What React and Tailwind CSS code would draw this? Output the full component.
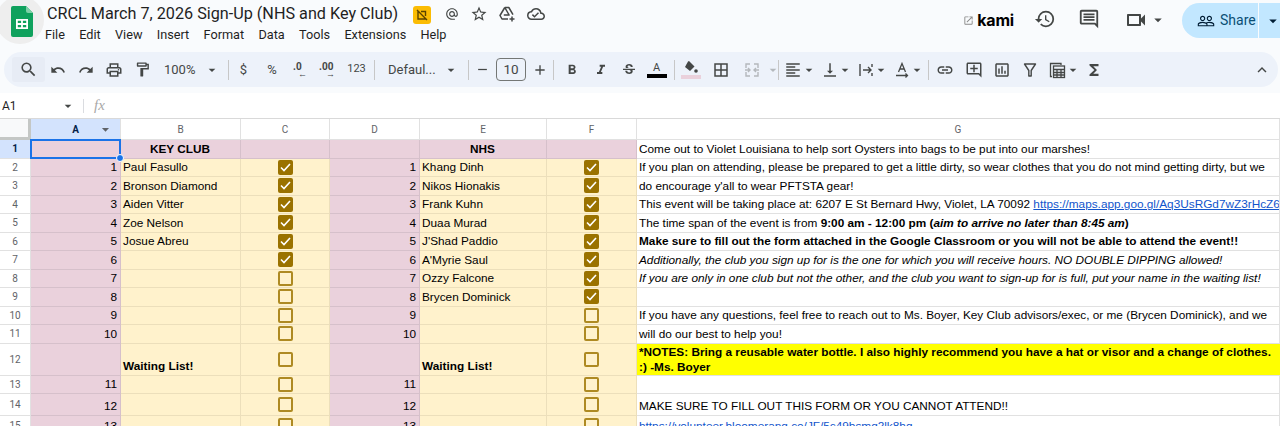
import React from "react";
import {
  MdSearch, MdUndo, MdRedo, MdOutlinePrint, MdOutlineFormatPaint, MdArrowDropDown, MdRemove, MdAdd,
  MdFormatBold, MdFormatItalic, MdStrikethroughS, MdBorderAll, MdFormatAlignLeft, MdVerticalAlignBottom,
  MdLink, MdOutlineAddComment, MdOutlineInsertChart, MdFunctions, MdExpandLess, MdHistory, MdOutlineComment,
  MdOutlineVideocam, MdPeopleOutline, MdStarBorder, MdOutlineCloudDone, MdOpenInNew,
  MdOutlineAlternateEmail,
} from "react-icons/md";

const G = "#444746";

function SheetsLogo() {
  return (
    <svg width="22" height="31" viewBox="0 0 22 31">
      <path d="M2 0h13l7 7v22a2 2 0 0 1-2 2H2a2 2 0 0 1-2-2V2a2 2 0 0 1 2-2z" fill="#0fa15d" />
      <path d="M15 0l7 7h-5a2 2 0 0 1-2-2z" fill="#7fd0a8" />
      <path d="M5 13h12v10H5z M6.8 14.8v2.3h3.3v-2.3z M11.9 14.8v2.3h3.3v-2.3z M6.8 18.9v2.3h3.3v-2.3z M11.9 18.9v2.3h3.3v-2.3z" fill="#fff" fillRule="evenodd" />
    </svg>
  );
}

function DriveAdd() {
  return (
    <svg width="18" height="18" viewBox="0 0 18 18" fill="none" stroke="#444746" strokeWidth="1.5" strokeLinejoin="round">
      <path d="M6.8 2.5h4l4.2 7.2M6.8 2.5L2 10.5l2 3.5h6M6.8 2.5l4.3 7.5H5.8" />
      <path d="M14 11.5v5M11.5 14h5" />
    </svg>
  );
}

function Btn({ w = "w-[28px]", children }) {
  return <div className={`${w} h-[24px] flex items-center justify-center shrink-0`}>{children}</div>;
}
const Sep = () => <div className="w-px h-[20px] bg-[#c7c7c7] shrink-0" />;
const Caret = ({ c = G }) => <MdArrowDropDown size={16} color={c} />;
const NearCaret = () => <div className="-ml-[3px] mr-[3px] shrink-0"><Caret /></div>;

function TextColor() {
  return (
    <div className="flex flex-col items-center">
      <span className="text-[11px] leading-[13px] text-[#444746]">A</span>
      <div className="w-[20px] h-[4px] bg-black" />
    </div>
  );
}
function FillColor() {
  return (
    <div className="flex flex-col items-center">
      <svg width="16" height="14" viewBox="0 0 16 14">
        <path d="M5 0.5l1-0.5 5.5 5.5L7 10 2 6z" fill="#444746" />
        <circle cx="13" cy="10" r="1.8" fill="#444746" />
      </svg>
      <div className="w-[20px] h-[4px] bg-[#ead1dc]" />
    </div>
  );
}
function Merge() {
  return (
    <svg width="16" height="16" viewBox="0 0 16 16" fill="none" stroke="#b4b8bc" strokeWidth="1.4">
      <path d="M6 2H2v4M2 10v4h4M10 2h4v4M14 10v4h-4M1 8h5M15 8h-5M4 6l2 2-2 2M12 6l-2 2 2 2" />
    </svg>
  );
}
function WrapIcon() {
  return (
    <svg width="16" height="16" viewBox="0 0 16 16" fill="none" stroke="#444746" strokeWidth="1.4">
      <path d="M2 2v12M14 2v3M14 11v3M5 8h8M10 5l3 3-3 3" />
    </svg>
  );
}
function RotateIcon() {
  return (
    <svg width="16" height="16" viewBox="0 0 16 16" fill="none" stroke="#444746" strokeWidth="1.3">
      <path d="M4.5 10L8 1.5 11.5 10M5.8 7h4.4M2 13.5h11M11.5 11.5l2 2-2 2" />
    </svg>
  );
}
function FilterIcon() {
  return (
    <svg width="14" height="16" viewBox="0 0 14 16" fill="none" stroke="#444746" strokeWidth="1.4" strokeLinejoin="round">
      <path d="M1.5 2h11L8.2 8.5V14H5.8V8.5z" />
    </svg>
  );
}
function TableFn() {
  return (
    <svg width="17" height="18" viewBox="0 0 17 18" fill="none" stroke="#444746" strokeWidth="1.3">
      <path d="M3 15.5H1.5V2.5H12V4" />
      <rect x="4.5" y="5" width="11" height="11.5" />
      <path d="M4.5 8.5h11M4.5 11.5h11M4.5 14h11M8 8.5v8M12 8.5v8" />
    </svg>
  );
}
function Fx() {
  return <span className="text-[15px] italic text-[#a8a8a8] [font-family:'Liberation_Serif',serif]">fx</span>;
}

function Check({ on }) {
  if (on) {
    return (
      <div className="w-[15px] h-[15px] rounded-[2px] bg-[#9a7200] flex items-center justify-center">
        <svg width="11" height="9" viewBox="0 0 11 9" fill="none" stroke="#fff" strokeWidth="1.6">
          <path d="M1 4.5l3 3 6-6.5" />
        </svg>
      </div>
    );
  }
  return <div className="w-[15px] h-[15px] rounded-[2px] border-2 border-[#ae8a22]" />;
}

const PINK = "bg-[#ead1dc] border-[#d6c0cb]";
const YEL = "bg-[#fff2cc] border-[#ecdfbb]";
const base = "border-r border-b flex items-end pl-[2px] pr-[3px] pb-[1px] leading-[15px] whitespace-nowrap overflow-hidden min-w-0";

function Link({ children }) {
  return <span className="text-[#1155cc] underline">{children}</span>;
}

const rows = [
  { n: 1, a: "", b: "KEY CLUB", d: "", e: "NHS", head: true,
    g: "Come out to Violet Louisiana to help sort Oysters into bags to be put into our marshes!" },
  { n: 2, a: 1, b: "Paul Fasullo", c: 1, d: 1, e: "Khang Dinh", f: 1,
    g: "If you plan on attending, please be prepared to get a little dirty, so wear clothes that you do not mind getting dirty, but we" },
  { n: 3, a: 2, b: "Bronson Diamond", c: 1, d: 2, e: "Nikos Hionakis", f: 1, g: "do encourage y'all to wear PFTSTA gear!" },
  { n: 4, a: 3, b: "Aiden Vitter", c: 1, d: 3, e: "Frank Kuhn", f: 1,
    g: <>This event will be taking place at: 6207 E St Bernard Hwy, Violet, LA 70092 <Link>https://maps.app.goo.gl/Aq3UsRGd7wZ3rHcZ6</Link></> },
  { n: 5, a: 4, b: "Zoe Nelson", c: 1, d: 4, e: "Duaa Murad", f: 1,
    g: <>The time span of the event is from <b>9:00 am - 12:00 pm (<i>aim to arrive no later than 8:45 am</i>)</b></> },
  { n: 6, a: 5, b: "Josue Abreu", c: 1, d: 5, e: "J'Shad Paddio", f: 1,
    g: <b>Make sure to fill out the form attached in the Google Classroom or you will not be able to attend the event!!</b> },
  { n: 7, a: 6, b: "", c: 1, d: 6, e: "A'Myrie Saul", f: 1,
    g: <i>Additionally, the club you sign up for is the one for which you will receive hours. NO DOUBLE DIPPING allowed!</i> },
  { n: 8, a: 7, b: "", c: 0, d: 7, e: "Ozzy Falcone", f: 1,
    g: <i>If you are only in one club but not the other, and the club you want to sign-up for is full, put your name in the waiting list!</i> },
  { n: 9, a: 8, b: "", c: 0, d: 8, e: "Brycen Dominick", f: 1, g: "" },
  { n: 10, a: 9, b: "", c: 0, d: 9, e: "", f: 0,
    g: "If you have any questions, feel free to reach out to Ms. Boyer, Key Club advisors/exec, or me (Brycen Dominick), and we" },
  { n: 11, a: 10, b: "", c: 0, d: 10, e: "", f: 0, g: "will do our best to help you!" },
  { n: 12, a: "", b: <b>Waiting List!</b>, c: 0, d: "", e: <b>Waiting List!</b>, f: 0, note: true },
  { n: 13, a: 11, b: "", c: 0, d: 11, e: "", f: 0, g: "" },
  { n: 14, a: 12, b: "", c: 0, d: 12, e: "", f: 0, g: "MAKE SURE TO FILL OUT THIS FORM OR YOU CANNOT ATTEND!!" },
  { n: 15, a: 13, b: "", c: 0, d: 13, e: "", f: 0, g: <Link>https://volunteer.bloomerang.co/JF/5c49bsmq2lk8hg</Link> },
];

function Row({ r }) {
  const num = "justify-end " + PINK;
  const headCls = r.head ? "justify-center font-bold " + PINK : YEL;
  const checkCell = (v) => (
    <div className={`border-r border-b flex items-center justify-center ${r.head ? PINK : YEL}`}>
      {!r.head && <Check on={v === 1} />}
    </div>
  );
  return (
    <>
      <div className={`border-r border-b border-[#e1e1e1] flex items-center justify-center text-[10px] [font-family:Roboto,sans-serif] ${r.n === 1 ? "bg-[#d3e3fd] font-bold text-[#041e49]" : "bg-white text-[#5f6368]"}`}>
        {r.n}
      </div>
      <div className={`${base} ${num} relative !overflow-visible`}>
        {r.a}
        {r.n === 1 && (
          <div className="absolute inset-[-1px] border-2 border-[#1a73e8] z-10">
            <div className="absolute right-[-5px] bottom-[-5px] w-[8px] h-[8px] rounded-full bg-[#1a73e8] border border-white" />
          </div>
        )}
      </div>
      <div className={`${base} ${headCls}`}>{r.b}</div>
      {checkCell(r.c)}
      <div className={`${base} ${num}`}>{r.d}</div>
      <div className={`${base} ${headCls}`}>{r.e}</div>
      {checkCell(r.f)}
      {r.note ? (
        <div className="border-b border-[#e1e1e1] bg-[#ffff00] flex flex-col justify-center pl-[2px] pt-[2px] font-bold leading-[15px] whitespace-nowrap overflow-hidden">
          <div>*NOTES: Bring a reusable water bottle. I also highly recommend you have a hat or visor and a change of clothes.</div>
          <div>:) -Ms. Boyer</div>
        </div>
      ) : (
        <div className={`${base} border-[#e1e1e1] bg-white`}><span>{r.g}</span></div>
      )}
    </>
  );
}

const heads = ["B", "C", "D", "E", "F", "G"];

export default function App() {
  return (
    <div className="w-[1280px] h-[426px] overflow-hidden bg-white flex flex-col [font-family:'Liberation_Sans',Arial,sans-serif] text-[11.8px] text-black">
      {/* Title bar */}
      <div className="bg-[#f9fbfd] h-[52px] shrink-0 flex overflow-hidden">
        <div className="w-[48px] h-[48px] -ml-[4px] -mt-[4px] rounded-full bg-[#eeeeee] shrink-0 flex items-center justify-center pl-[3px] pt-[2px]">
          <SheetsLogo />
        </div>
        <div className="ml-[3px] flex flex-col [font-family:Roboto,sans-serif]">
          <div className="flex items-center h-[28px]">
            <span className="text-[16.2px] text-[#1f1f1f] leading-[28px] whitespace-nowrap">CRCL March 7, 2026 Sign-Up (NHS and Key Club)</span>
            <div className="ml-[15px] mt-[1px] w-[18px] h-[18px] rounded-[3px] bg-[#fbbc04] flex items-center justify-center">
              <svg width="12" height="12" viewBox="0 0 12 12" fill="none" stroke="#5b4300" strokeWidth="1.4">
                <path d="M1 1l10 10M2 2v8h8M5 2.5h4.5V7" />
              </svg>
            </div>
            <div className="ml-[14px]"><MdOutlineAlternateEmail size={14} color={G} /></div>
            <div className="ml-[11px]"><MdStarBorder size={18} color={G} /></div>
            <div className="ml-[10px]"><DriveAdd /></div>
            <div className="ml-[11px]"><MdOutlineCloudDone size={18} color={G} /></div>
          </div>
          <div className="flex gap-[14.3px] text-[12.7px] text-[#1f1f1f] leading-[16px] -ml-[2px] mt-[-1px]">
            <span>File</span><span>Edit</span><span>View</span><span>Insert</span><span>Format</span><span>Data</span><span>Tools</span><span>Extensions</span><span>Help</span>
          </div>
        </div>
        <div className="ml-auto flex items-start">
          <div className="flex items-center mt-[11px]">
            <MdOpenInNew size={11} color="#8a8a8a" />
            <span className="ml-[3px] text-[16px] font-bold leading-[18px] text-black [font-family:Inter,sans-serif] tracking-[-0.2px]">kami</span>
          </div>
          <div className="ml-[20px] mt-[8px]"><MdHistory size={22} color={G} /></div>
          <div className="ml-[22px] mt-[8px]"><MdOutlineComment size={22} color={G} /></div>
          <div className="ml-[24px] mt-[8px]"><MdOutlineVideocam size={24} color={G} /></div>
          <div className="mt-[11px] ml-[1px]"><MdArrowDropDown size={18} color={G} /></div>
          <div className="ml-[15px] mt-[3px] h-[35px] w-[100px] -mr-[2px] rounded-l-full bg-[#c2e7ff] flex items-center shrink-0 [font-family:Roboto,sans-serif]">
            <div className="ml-[15px]"><MdPeopleOutline size={18} color="#001d35" /></div>
            <span className="ml-[5px] text-[14px] font-normal text-[#0b4f75] w-[40px]">Share</span>
            <div className="ml-[2px] w-px h-[35px] bg-[#f9fbfd]" />
            <div className="ml-[5px]"><MdArrowDropDown size={18} color="#001d35" /></div>
          </div>
        </div>
      </div>

      {/* Toolbar band */}
      <div className="bg-[#f9fbfd] h-[41px] shrink-0 pl-[4px] pr-[2px]">
        <div className="h-[35px] rounded-[18px] bg-[#edf2fa] flex items-center pl-[8px] [font-family:Roboto,sans-serif] text-[#444746] text-[13px]">
          <div className="w-[33px] h-[25px] bg-[#e7ecf5] rounded-[3px] flex items-center justify-center shrink-0"><MdSearch size={19} color={G} /></div>
          <Btn w="w-[28px] -ml-[1px]"><MdUndo size={16} color={G} /></Btn>
          <Btn w="w-[27px]"><MdRedo size={16} color={G} /></Btn>
          <Btn w="w-[30px]"><MdOutlinePrint size={18} color={G} /></Btn>
          <Btn w="w-[26px]"><MdOutlineFormatPaint size={17} color={G} /></Btn>
          <div className="w-[73px] flex items-center shrink-0 pl-[9px]"><span className="w-[40px] text-[13px]">100%</span><Caret /></div>
          <Sep />
          <Btn w="w-[29px]"><span className="text-[13px]">$</span></Btn>
          <Btn w="w-[28px]"><span className="text-[13px]">%</span></Btn>
          <Btn><span className="relative w-[20px] h-[20px]"><span className="absolute left-[3px] top-[2px] text-[10px] font-bold leading-none">.0</span><span className="absolute left-[8px] top-[10px] text-[9px] leading-none">←</span></span></Btn>
          <Btn><span className="relative w-[20px] h-[20px]"><span className="absolute left-[1px] top-[2px] text-[10px] font-bold leading-none">.00</span><span className="absolute left-[8px] top-[10px] text-[9px] leading-none">→</span></span></Btn>
          <Btn w="w-[29px]"><span className="text-[11px]">123</span></Btn>
          <div className="w-px h-[20px] bg-[#c7c7c7] shrink-0 ml-[3px]" />
          <div className="w-[93px] flex items-center shrink-0 pl-[13px]"><span className="w-[55px] text-[13px] whitespace-nowrap">Defaul...</span><Caret /></div>
          <Sep />
          <Btn w="w-[27px]"><MdRemove size={15} color={G} /></Btn>
          <div className="w-[30px] h-[23px] border border-[#747775] rounded-[4px] flex items-center justify-center text-[13.5px] shrink-0">10</div>
          <Btn w="w-[27px]"><MdAdd size={16} color={G} /></Btn>
          <Sep />
          <Btn w="w-[31px] ml-[2px]"><MdFormatBold size={16} color={G} /></Btn>
          <Btn><MdFormatItalic size={16} color={G} /></Btn>
          <Btn w="w-[27px]"><MdStrikethroughS size={16} color={G} /></Btn>
          <Btn w="w-[29px]"><TextColor /></Btn>
          <div className="w-px h-[20px] bg-[#c7c7c7] shrink-0 ml-[3px]" />
          <Btn w="w-[32px]"><FillColor /></Btn>
          <Btn w="w-[28px]"><MdBorderAll size={18} color={G} /></Btn>
          <Btn w="w-[27px] ml-[3px]"><Merge /></Btn>
          <Caret c="#b4b8bc" />
          <div className="w-px h-[20px] bg-[#c7c7c7] shrink-0 -ml-[3px] mr-[3px]" />
          <Btn w="w-[22px]"><MdFormatAlignLeft size={18} color={G} /></Btn>
          <NearCaret />
          <Btn w="w-[20px]"><MdVerticalAlignBottom size={18} color={G} /></Btn>
          <NearCaret />
          <Btn w="w-[20px]"><WrapIcon /></Btn>
          <NearCaret />
          <Btn w="w-[20px]"><RotateIcon /></Btn>
          <NearCaret />
          <Sep />
          <Btn w="w-[31px]"><MdLink size={18} color={G} /></Btn>
          <Btn w="w-[28px]"><MdOutlineAddComment size={18} color={G} /></Btn>
          <Btn w="w-[28px]"><MdOutlineInsertChart size={18} color={G} /></Btn>
          <Btn w="w-[28px]"><FilterIcon /></Btn>
          <Btn w="w-[27px]"><TableFn /></Btn>
          <div className="-ml-[6px] shrink-0"><Caret /></div>
          <Btn w="w-[26px]"><MdFunctions size={18} color={G} /></Btn>
          <div className="ml-auto mr-[7px]"><MdExpandLess size={18} color={G} /></div>
        </div>
      </div>

      {/* Formula bar */}
      <div className="h-[26px] shrink-0 flex items-center border-b border-[#d9d9d9] [font-family:Roboto,sans-serif]">
        <span className="ml-[2px] w-[58px] text-[12px] text-[#1f1f1f]">A1</span>
        <Caret />
        <div className="ml-[7px] w-px h-[14px] bg-[#dadce0]" />
        <div className="ml-[10px]"><Fx /></div>
      </div>

      {/* Grid */}
      <div className="grid grid-cols-[31px_90px_120px_89px_90px_127px_90px_1fr] grid-rows-[21px_18.5px_18.5px_18.5px_18.5px_18.5px_18.5px_18.5px_18.5px_18.5px_18.5px_18.5px_32px_18px_22px_20px] flex-1 overflow-hidden">
        <div className="bg-[#f8f9fa] border-r-[3px] border-b-[3px] border-[#c4c7c5]" />
        <div className="bg-[#d3e3fd] border-r border-b border-[#e1e1e1] relative flex items-center justify-center text-[10px] font-bold text-[#041e49] [font-family:Roboto,sans-serif]">
          A
          <div className="absolute right-[6px] top-[2px]"><MdArrowDropDown size={17} color="#5f6368" /></div>
        </div>
        {heads.map((h) => (
          <div key={h} className="bg-white border-r border-b border-[#e1e1e1] flex items-center justify-center text-[10px] text-[#5f6368] [font-family:Roboto,sans-serif]">{h}</div>
        ))}
        {rows.map((r) => <Row key={r.n} r={r} />)}
      </div>
    </div>
  );
}
